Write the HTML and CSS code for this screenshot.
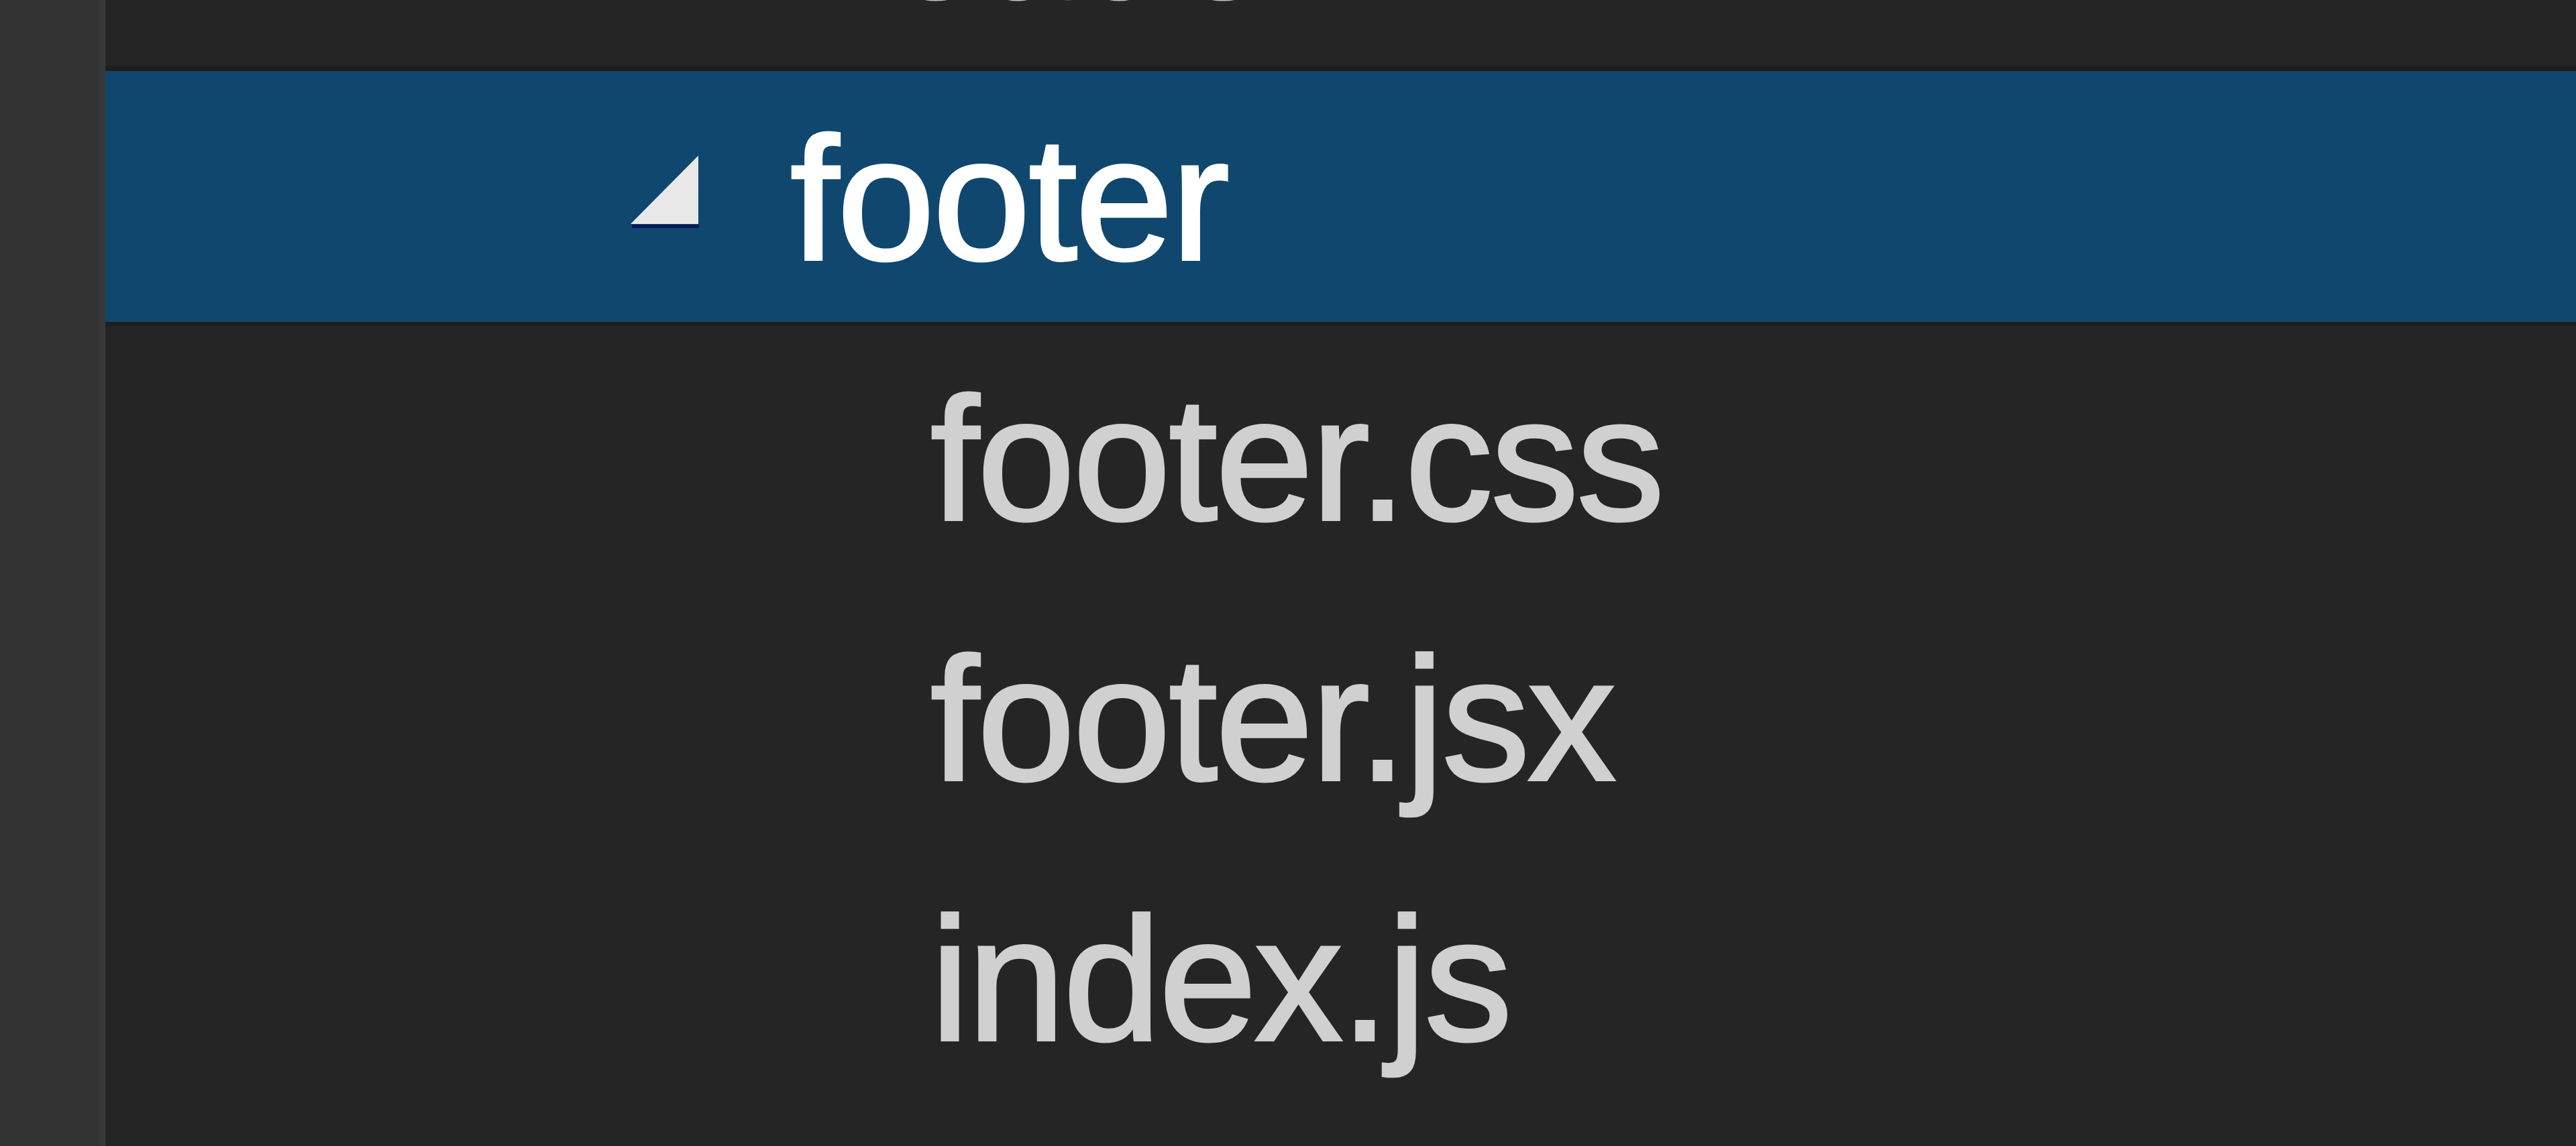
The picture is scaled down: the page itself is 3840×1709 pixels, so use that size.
FILE: index.html
```html
<!DOCTYPE html>
<html lang="en">
<head>
<meta charset="utf-8">
<title>Explorer</title>
<link rel="stylesheet" href="styles.css">
</head>
<body>
<div class="app">
  <div class="gutter"></div>
  <div class="tree">
    <div class="row folder prev">
      <span class="twistie-space"></span>
      <span class="label">header</span>
    </div>
    <div class="row folder selected">
      <svg class="twistie" width="104" height="110" viewBox="0 0 104 110" aria-hidden="true">
        <polygon points="2,103 102,103 102,108 2,108" fill="#06165a"/>
        <polygon points="101,0 0,102 101,102" fill="#e8e8e8"/>
      </svg>
      <span class="label">footer</span>
    </div>
    <div class="row file"><span class="label">footer.css</span></div>
    <div class="row file"><span class="label">footer.jsx</span></div>
    <div class="row file"><span class="label">index.js</span></div>
  </div>
</div>
</body>
</html>
```

FILE: styles.css
```css
html, body {
  margin: 0;
  padding: 0;
  background: #242524;
  overflow: hidden;
}

.app {
  display: flex;
  height: 1709px;
  overflow: hidden;
}

.gutter {
  width: 157px;
  flex: 0 0 157px;
  background: #333333;
  box-shadow: inset -10px 0 0 #383838;
}

.tree {
  flex: 1;
  display: flex;
  flex-direction: column;
  margin-top: -285px;
  font-family: "Liberation Sans", Arial, sans-serif;
  font-size: 262px;
  font-weight: 400;
  letter-spacing: -3px;
  -webkit-text-stroke: 4px currentColor;
  color: #d0d0d0;
}

.row {
  flex: 0 0 388px;
  height: 388px;
  display: flex;
  align-items: center;
  box-sizing: border-box;
  line-height: 1;
  white-space: nowrap;
}

.row .label {
  display: block;
  padding-top: 8px;
}

.folder {
  padding-left: 783px;
}

.twistie,
.twistie-space {
  flex: 0 0 104px;
  width: 104px;
  height: 110px;
  margin-top: -12px;
}

.folder .label {
  margin-left: 134px;
}

.prev .label {
  color: #c4c4c4;
  padding-top: 0;
  padding-bottom: 4px;
}

.selected {
  background: #0f476f;
  border-top: 7px solid #1e1e1a;
  border-bottom: 7px solid #1e1e1a;
  margin-top: -4px;
  color: #ffffff;
}

.file {
  padding-left: 1230px;
}
```
